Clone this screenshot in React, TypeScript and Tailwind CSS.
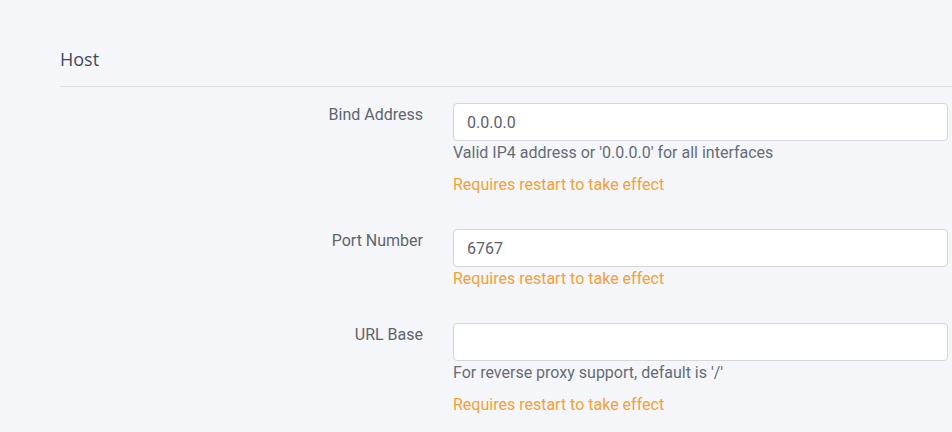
import React from "react"

type Field = {
  label: string
  value: string
  help?: string
  restart?: boolean
}

const fields: Field[] = [
  { label: "Bind Address", value: "0.0.0.0", help: "Valid IP4 address or '0.0.0.0' for all interfaces", restart: true },
  { label: "Port Number", value: "6767", restart: true },
  { label: "URL Base", value: "", help: "For reverse proxy support, default is '/'", restart: true },
]

function Row({ field }: { field: Field }) {
  return (
    <div className="grid grid-cols-[363px_1fr] gap-x-[30px] mb-[32px]">
      <label className="text-right text-[16px] leading-[24px] text-[#5d6570]">{field.label}</label>
      <div className="flex flex-col">
        <input
          readOnly
          value={field.value}
          className="h-[38px] w-full rounded-[4px] border border-[#d3d6db] bg-white px-[13px] text-[16px] text-[#5a6270] outline-none"
        />
        {field.help && (
          <div className="text-[16px] leading-[24px] text-[#656d78]">{field.help}</div>
        )}
        {field.restart && (
          <div className={`${field.help ? "mt-[8px]" : "mt-0"} text-[16px] leading-[24px] text-[#f7a033]`}>
            Requires restart to take effect
          </div>
        )}
      </div>
    </div>
  )
}

export default function App() {
  return (
    <div className="min-h-screen w-full bg-[#f5f6fa] pt-[47px] pl-[60px] pr-[4px]" style={{ fontFamily: "Roboto, 'Liberation Sans', sans-serif" }}>
      <h2 className="text-[18px] leading-[24px] text-[#3f4b5e]" style={{ fontFamily: "'Open Sans', Roboto, sans-serif" }}>
        Host
      </h2>
      <div className="mt-[15px] -mr-[4px] border-t border-[#dcdee3]" />
      <div className="mt-[16px]">
        {fields.map((f) => (
          <Row key={f.label} field={f} />
        ))}
      </div>
    </div>
  )
}
